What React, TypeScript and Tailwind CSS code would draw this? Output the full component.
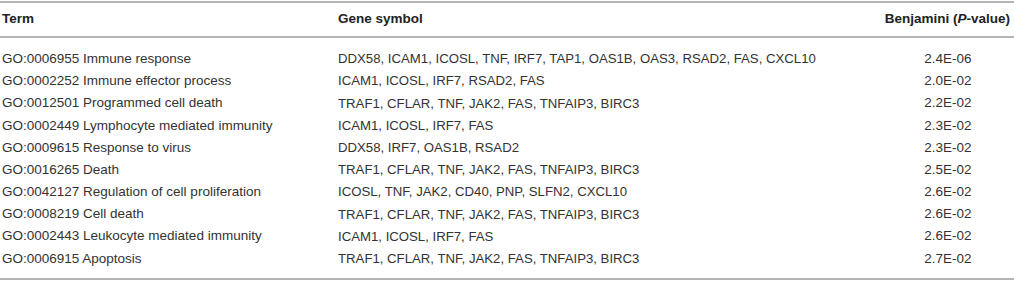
const rows = [
  ['GO:0006955 Immune response', 'DDX58, ICAM1, ICOSL, TNF, IRF7, TAP1, OAS1B, OAS3, RSAD2, FAS, CXCL10', '2.4E-06'],
  ['GO:0002252 Immune effector process', 'ICAM1, ICOSL, IRF7, RSAD2, FAS', '2.0E-02'],
  ['GO:0012501 Programmed cell death', 'TRAF1, CFLAR, TNF, JAK2, FAS, TNFAIP3, BIRC3', '2.2E-02'],
  ['GO:0002449 Lymphocyte mediated immunity', 'ICAM1, ICOSL, IRF7, FAS', '2.3E-02'],
  ['GO:0009615 Response to virus', 'DDX58, IRF7, OAS1B, RSAD2', '2.3E-02'],
  ['GO:0016265 Death', 'TRAF1, CFLAR, TNF, JAK2, FAS, TNFAIP3, BIRC3', '2.5E-02'],
  ['GO:0042127 Regulation of cell proliferation', 'ICOSL, TNF, JAK2, CD40, PNP, SLFN2, CXCL10', '2.6E-02'],
  ['GO:0008219 Cell death', 'TRAF1, CFLAR, TNF, JAK2, FAS, TNFAIP3, BIRC3', '2.6E-02'],
  ['GO:0002443 Leukocyte mediated immunity', 'ICAM1, ICOSL, IRF7, FAS', '2.6E-02'],
  ['GO:0006915 Apoptosis', 'TRAF1, CFLAR, TNF, JAK2, FAS, TNFAIP3, BIRC3', '2.7E-02'],
];

export default function App() {
  return (
    <div className="w-[1014px] h-[290px] bg-white pt-px font-['Liberation_Sans',Arial,sans-serif] text-[13.5px] text-[#333]">
      <div className="border-t-2 border-b-2 border-[#b5b5b5]">
        {/* header */}
        <div className="grid grid-cols-[338px_1fr_auto] h-[35px] items-center font-bold text-[#222] border-b-2 border-[#b5b5b5]">
          <div className="pl-[2px]">Term</div>
          <div>Gene symbol</div>
          <div className="pr-[4px]">
            Benjamini (<span className="italic">P</span>-value)
          </div>
        </div>

        {/* body */}
        <div className="grid grid-cols-[338px_1fr_128px] pt-[10px] pb-[8px]">
          {rows.map(([term, genes, p]) => (
            <div key={term} className="contents">
              <div className="pl-[2px] h-[22.2px] flex items-center">{term}</div>
              <div className="h-[22.2px] flex items-center text-[13.2px]">{genes}</div>
              <div className="h-[22.2px] flex items-center justify-center pr-[4px]">{p}</div>
            </div>
          ))}
        </div>
      </div>
    </div>
  );
}
